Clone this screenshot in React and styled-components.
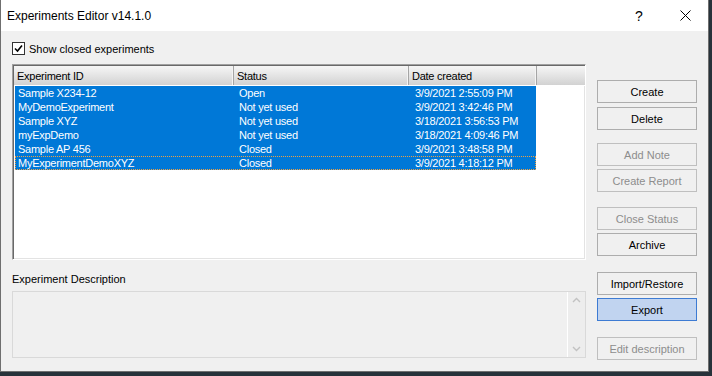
import React from "react";
import styled, { createGlobalStyle } from "styled-components";

const Global = createGlobalStyle`
  html, body { margin: 0; padding: 0; }
  body {
    width: 712px; height: 376px; overflow: hidden;
    background: #27323a;
    font-family: "Liberation Sans", Arial, sans-serif;
  }
`;

const Window = styled.div`
  width: 709px; height: 372px; box-sizing: border-box;
  background: #f0f0f0;
  border: 1px solid #6f6f6f; border-top: none;
  display: flex; flex-direction: column;
`;

const TitleBar = styled.div`
  height: 31px; flex: none; background: #fff;
  display: flex; align-items: center;
  padding-left: 6px;
  font-size: 12px; color: #000;
`;
const Title = styled.div` flex: 1; `;
const CaptionBtn = styled.div`
  width: 46px; height: 31px;
  display: flex; align-items: center; justify-content: center;
  font-size: 14px; color: #000;
`;

const Body = styled.div`
  flex: 1; display: flex; flex-direction: column;
  padding: 11px 0 0 11px;
`;

const CheckRow = styled.label`
  display: flex; align-items: center; gap: 4px;
  height: 13px; font-size: 11px; color: #000;
`;
const CheckBox = styled.span`
  width: 13px; height: 13px; box-sizing: border-box;
  border: 1px solid #333; background: #fff;
  display: flex; align-items: center; justify-content: center;
`;

const Main = styled.div`
  display: flex; gap: 11px; margin-top: 9px;
`;
const LeftCol = styled.div`
  width: 574px; display: flex; flex-direction: column;
`;
const RightCol = styled.div`
  width: 100px; display: flex; flex-direction: column; padding-top: 16px;
`;

const ListView = styled.div`
  height: 196px; box-sizing: border-box; background: #fff;
  border-top: 1px solid #a0a0a0; border-left: 1px solid #a0a0a0;
  border-right: 1px solid #fff; border-bottom: 1px solid #fff;
  box-shadow: inset 1px 1px 0 #696969, inset -1px -1px 0 #e3e3e3;
  padding: 1px 0 0 1px;
  font-size: 11px; letter-spacing: -0.25px; color: #000;
`;
const Header = styled.div`
  display: flex; height: 19px;
  background: linear-gradient(#f6f6f6, #e6e6e6 45%, #d2d2d2);
  border-bottom: 1px solid #fff;
`;
const HeadCell = styled.div`
  width: ${(p) => p.w}px; box-sizing: border-box; flex: none;
  padding-left: ${(p) => p.pl}px;
  display: flex; align-items: center;
  border-right: 1px solid #a5a5a5;
  box-shadow: inset -1px 0 0 #f4f4f4;
`;
const HeadFill = styled.div` flex: 1; `;

const Row = styled.div`
  display: flex; height: 14px; margin-left: 1px; width: 521px;
  background: #0078d7; color: #fff; box-sizing: border-box;
  outline: ${(p) => (p.focus ? "1px dotted #f0a040" : "none")};
  outline-offset: -1px;
`;
const Cell = styled.div`
  width: ${(p) => p.w}px; flex: none; box-sizing: border-box;
  padding-left: ${(p) => p.pl}px;
  display: flex; align-items: center; white-space: nowrap;
`;

const DescLabel = styled.div`
  font-size: 11px; color: #000; margin-top: 13px; height: 13px;
  line-height: 13px;
`;
const DescBox = styled.div`
  margin-top: 5px; height: 67px; box-sizing: border-box;
  border: 1px solid #d9d9d9; background: #f0f0f0;
  display: flex; justify-content: flex-end;
`;
const ScrollBar = styled.div`
  width: 17px; background: #ededed; border-left: 1px solid #fff;
  display: flex; flex-direction: column; justify-content: space-between;
  align-items: center; padding: 5px 0;
`;

const Button = styled.div`
  height: 23px; box-sizing: border-box; flex: none;
  margin-top: ${(p) => p.mt || 0}px;
  border: 1px solid ${(p) => (p.primary ? "#3d7bd3" : p.disabled ? "#bfbfbf" : "#adadad")};
  background: ${(p) => (p.primary ? "#c1d4f0" : "#f0f0f0")};
  color: ${(p) => (p.disabled ? "#8d8d8d" : "#000")};
  font-size: 11px;
  display: flex; align-items: center; justify-content: center;
`;

const Chevron = ({ up }) => (
  <svg width="9" height="6" viewBox="0 0 9 6">
    <path d={up ? "M1 5 L4.5 1.5 L8 5" : "M1 1 L4.5 4.5 L8 1"} fill="none" stroke="#c2c2c2" strokeWidth="1.4" />
  </svg>
);

const rows = [
  ["Sample X234-12", "Open", "3/9/2021 2:55:09 PM"],
  ["MyDemoExperiment", "Not yet used", "3/9/2021 3:42:46 PM"],
  ["Sample XYZ", "Not yet used", "3/18/2021 3:56:53 PM"],
  ["myExpDemo", "Not yet used", "3/18/2021 4:09:46 PM"],
  ["Sample AP 456", "Closed", "3/9/2021 3:48:58 PM"],
  ["MyExperimentDemoXYZ", "Closed", "3/9/2021 4:18:12 PM"],
];

const buttons = [
  { t: "Create", mt: 0 },
  { t: "Delete", mt: 4 },
  { t: "Add Note", mt: 13, disabled: true },
  { t: "Create Report", mt: 3, disabled: true },
  { t: "Close Status", mt: 15, disabled: true },
  { t: "Archive", mt: 3 },
  { t: "Import/Restore", mt: 16 },
  { t: "Export", mt: 3, primary: true },
  { t: "Edit description", mt: 16, disabled: true },
];

export default function App() {
  return (
    <>
      <Global />
      <Window>
        <TitleBar>
          <Title>Experiments Editor v14.1.0</Title>
          <CaptionBtn>?</CaptionBtn>
          <CaptionBtn>
            <svg width="11" height="11" viewBox="0 0 11 11">
              <path d="M0.5 0.5 L10.5 10.5 M10.5 0.5 L0.5 10.5" stroke="#000" strokeWidth="1" />
            </svg>
          </CaptionBtn>
        </TitleBar>
        <Body>
          <CheckRow>
            <CheckBox>
              <svg width="9" height="9" viewBox="0 0 9 9">
                <path d="M1 4.5 L3.5 7 L8 1.5" fill="none" stroke="#000" strokeWidth="1.6" />
              </svg>
            </CheckBox>
            Show closed experiments
          </CheckRow>
          <Main>
            <LeftCol>
              <ListView>
                <Header>
                  <HeadCell w={220} pl={3}>Experiment ID</HeadCell>
                  <HeadCell w={175} pl={3}>Status</HeadCell>
                  <HeadCell w={128} pl={3}>Date created</HeadCell>
                  <HeadFill />
                </Header>
                {rows.map((r, i) => (
                  <Row key={i} focus={i === rows.length - 1}>
                    <Cell w={219} pl={3}>{r[0]}</Cell>
                    <Cell w={175} pl={5}>{r[1]}</Cell>
                    <Cell w={127} pl={6}>{r[2]}</Cell>
                  </Row>
                ))}
              </ListView>
              <DescLabel>Experiment Description</DescLabel>
              <DescBox>
                <ScrollBar>
                  <Chevron up />
                  <Chevron />
                </ScrollBar>
              </DescBox>
            </LeftCol>
            <RightCol>
              {buttons.map((b) => (
                <Button key={b.t} mt={b.mt} disabled={b.disabled} primary={b.primary}>
                  {b.t}
                </Button>
              ))}
            </RightCol>
          </Main>
        </Body>
      </Window>
    </>
  );
}
